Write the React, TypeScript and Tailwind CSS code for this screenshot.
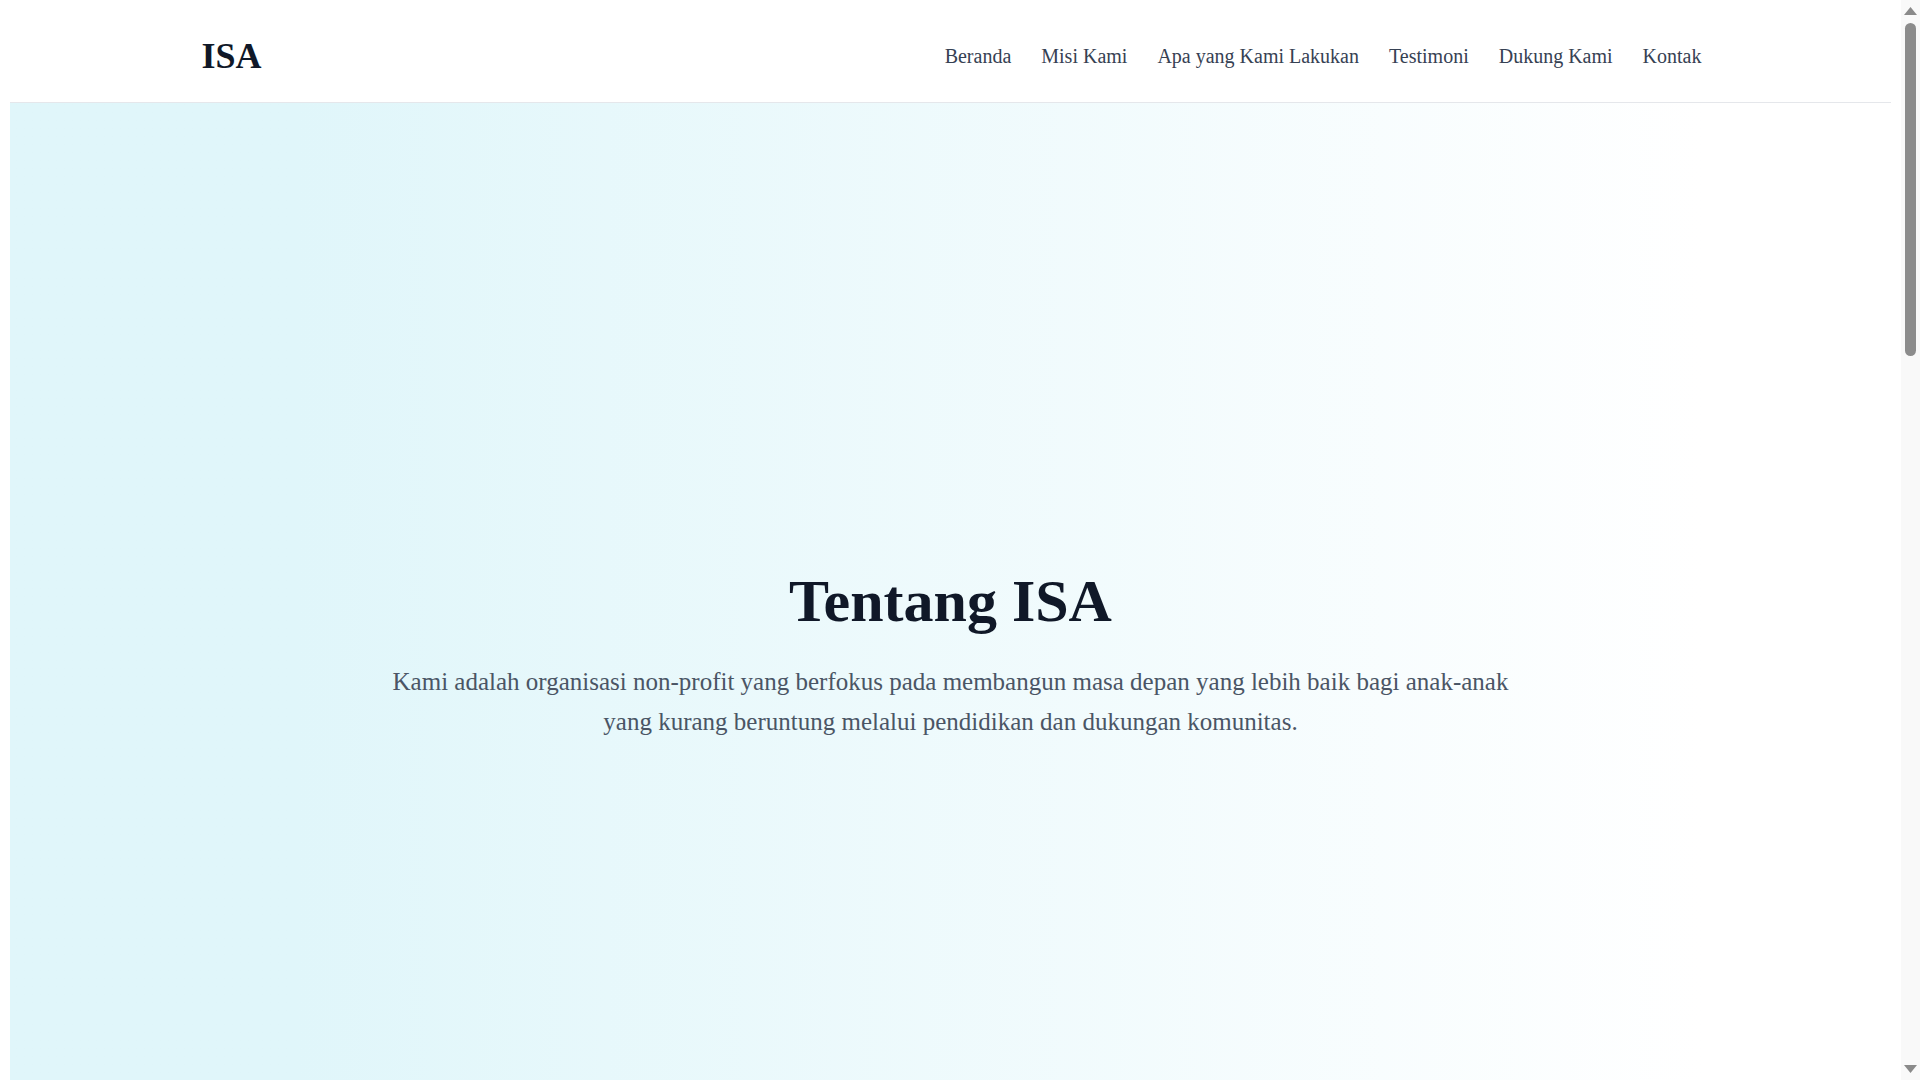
const links = ["Beranda", "Misi Kami", "Apa yang Kami Lakukan", "Testimoni", "Dukung Kami", "Kontak"];

const serif = { fontFamily: '"Liberation Serif", "Times New Roman", serif' };

function Header() {
  return (
    <header className="bg-white border-b border-gray-200">
      <div className="max-w-[1536px] mx-auto px-4 h-[102px] flex items-center justify-between">
        <a href="#" className="text-[36px] font-bold text-gray-900 leading-none pt-[10px] ml-[3px]">
          ISA
        </a>
        <nav className="flex items-center gap-[30px] pt-[10px] mr-[1px]">
          {links.map((l) => (
            <a key={l} href="#" className="text-[20px] text-gray-700 hover:text-gray-900">
              {l}
            </a>
          ))}
        </nav>
      </div>
    </header>
  );
}

function Hero() {
  return (
    <section className="min-h-[1080px] flex items-center justify-center bg-gradient-to-r from-[#e0f6fa] from-15% to-white to-90%">
      <div className="max-w-[1536px] mx-auto px-4 text-center mt-[20px]">
        <h1 className="text-[60px] font-bold text-gray-900 leading-tight mb-[23px]">Tentang ISA</h1>
        <p className="text-[25px] leading-[40px] text-gray-600 max-w-[1150px] mx-auto">
          Kami adalah organisasi non-profit yang berfokus pada membangun masa depan yang lebih baik bagi anak-anak
          yang kurang beruntung melalui pendidikan dan dukungan komunitas.
        </p>
      </div>
    </section>
  );
}

// window scrollbar as seen in the screenshot
function Scrollbar() {
  return (
    <div className="w-[19px] shrink-0 bg-[#f9f9f9] flex flex-col items-center py-[7px]">
      <svg width="13" height="8" viewBox="0 0 13 8" className="shrink-0">
        <path d="M6.5 0 L13 8 L0 8 Z" fill="#8a8a8a" />
      </svg>
      <div className="w-[11px] h-[333px] mt-[8px] rounded-full bg-[#8c8c8c] shrink-0" />
      <div className="flex-1" />
      <svg width="13" height="8" viewBox="0 0 13 8" className="shrink-0">
        <path d="M0 0 L13 0 L6.5 8 Z" fill="#8a8a8a" />
      </svg>
    </div>
  );
}

export default function App() {
  return (
    <div className="h-[1080px] flex overflow-hidden bg-white" style={serif}>
      <div className="flex-1 min-w-0 px-[10px] overflow-hidden">
        <Header />
        <Hero />
      </div>
      <Scrollbar />
    </div>
  );
}
